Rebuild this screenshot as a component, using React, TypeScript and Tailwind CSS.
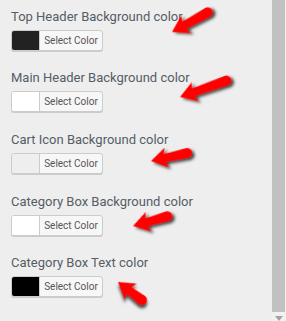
const fields = [
  { label: "Top Header Background color", swatch: "bg-[#222222]", gap: "mb-[17px]" },
  { label: "Main Header Background color", swatch: "bg-white", gap: "mb-[18px]" },
  { label: "Cart Icon Background color", swatch: "bg-[#eeeeee]", gap: "mb-[18px]" },
  { label: "Category Box Background color", swatch: "bg-white", gap: "mb-[17px]" },
  { label: "Category Box Text color", swatch: "bg-black", gap: "mb-0" },
];

// tip -> tail, page coordinates
const arrows = [
  { tip: [172, 32], tail: [212, 10] },
  { tip: [180, 97], tail: [231, 79] },
  { tip: [151, 161], tail: [192, 152] },
  { tip: [133, 226], tail: [172, 215] },
  { tip: [118, 282], tail: [146, 303] },
];

function Arrow({ tip, tail }: { tip: number[]; tail: number[] }) {
  const dx = tail[0] - tip[0];
  const dy = tail[1] - tip[1];
  const len = Math.sqrt(dx * dx + dy * dy);
  const angle = (Math.atan2(dy, dx) * 180) / Math.PI;
  const end = len - 5;
  const d = `M0,0 L16,-10 L14,-4 L${end},-5 A5,5 0 0 1 ${end},5 L14,4 L16,10 Z`;
  return (
    <path
      d={d}
      fill="#ff0000"
      filter="url(#shadow)"
      transform={`translate(${tip[0]} ${tip[1]}) rotate(${angle})`}
    />
  );
}

function ColorButton({ swatch }: { swatch: string }) {
  return (
    <div className="flex h-[21px] w-[92px] overflow-hidden rounded-[3px] border border-[#cccccc] bg-[#f7f7f7] shadow-[0_1px_0_#cccccc]">
      <div className={`w-[28px] border-r border-[#cccccc] ${swatch}`} />
      <div className="flex flex-1 items-center justify-center text-[10px] text-[#555555]">Select Color</div>
    </div>
  );
}

export default function App() {
  return (
    <div className="relative flex h-[321px] w-[286px] overflow-hidden bg-[#eeeeee] font-['Roboto',sans-serif]">
      <div className="flex-1 pl-[11px] pt-[7px]">
        {fields.map((f) => (
          <div key={f.label} className={f.gap}>
            <div className="mb-[3px] h-[20px] whitespace-nowrap text-[13px] leading-[20px] text-[#555d66]">{f.label}</div>
            <ColorButton swatch={f.swatch} />
          </div>
        ))}
      </div>
      <div className="flex w-[14px] flex-col bg-[#f1f1f1]">
        <div className="h-[312px] w-[13px] bg-[#c1c1c1]" />
        <div className="flex flex-1 items-end justify-center pr-[1px]">
          <div className="h-0 w-0 border-x-[4px] border-t-[5px] border-x-transparent border-t-[#a3a3a3]" />
        </div>
      </div>
      <svg className="pointer-events-none absolute inset-0" width="286" height="321">
        <defs>
          <filter id="shadow" x="-30%" y="-30%" width="160%" height="160%">
            <feDropShadow dx="2" dy="2.5" stdDeviation="1.6" floodColor="#000" floodOpacity="0.75" />
          </filter>
        </defs>
        {arrows.map((a, i) => (
          <Arrow key={i} tip={a.tip} tail={a.tail} />
        ))}
      </svg>
    </div>
  );
}
